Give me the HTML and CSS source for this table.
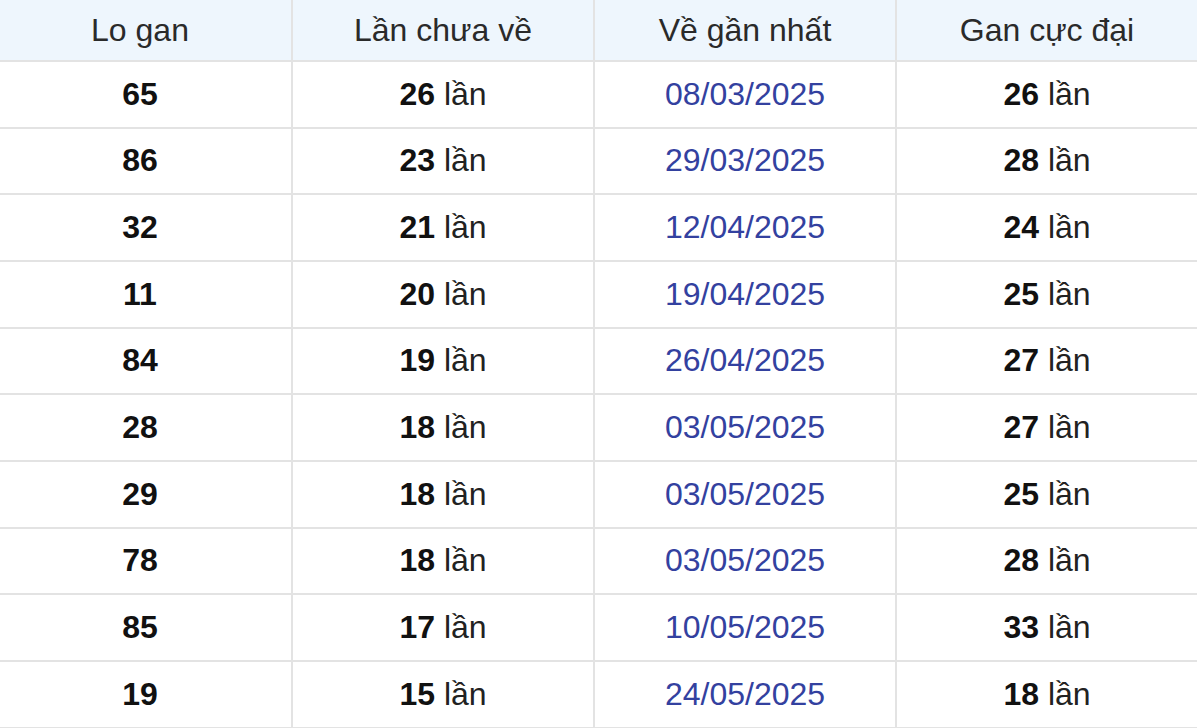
FILE: index.html
```html
<!DOCTYPE html>
<html lang="vi">
<head>
<meta charset="utf-8">
<title>Lo gan</title>
<link rel="stylesheet" href="styles.css">
</head>
<body>
<table class="gan-table">
  <colgroup>
    <col class="c"><col class="c"><col class="c"><col class="c">
  </colgroup>
  <thead>
    <tr>
      <th>Lo gan</th>
      <th>Lần chưa về</th>
      <th>Về gần nhất</th>
      <th>Gan cực đại</th>
    </tr>
  </thead>
  <tbody>
    <tr><td><b>65</b></td><td><b>26</b> lần</td><td class="date">08/03/2025</td><td><b>26</b> lần</td></tr>
    <tr><td><b>86</b></td><td><b>23</b> lần</td><td class="date">29/03/2025</td><td><b>28</b> lần</td></tr>
    <tr><td><b>32</b></td><td><b>21</b> lần</td><td class="date">12/04/2025</td><td><b>24</b> lần</td></tr>
    <tr><td><b>11</b></td><td><b>20</b> lần</td><td class="date">19/04/2025</td><td><b>25</b> lần</td></tr>
    <tr><td><b>84</b></td><td><b>19</b> lần</td><td class="date">26/04/2025</td><td><b>27</b> lần</td></tr>
    <tr><td><b>28</b></td><td><b>18</b> lần</td><td class="date">03/05/2025</td><td><b>27</b> lần</td></tr>
    <tr><td><b>29</b></td><td><b>18</b> lần</td><td class="date">03/05/2025</td><td><b>25</b> lần</td></tr>
    <tr><td><b>78</b></td><td><b>18</b> lần</td><td class="date">03/05/2025</td><td><b>28</b> lần</td></tr>
    <tr><td><b>85</b></td><td><b>17</b> lần</td><td class="date">10/05/2025</td><td><b>33</b> lần</td></tr>
    <tr><td><b>19</b></td><td><b>15</b> lần</td><td class="date">24/05/2025</td><td><b>18</b> lần</td></tr>
  </tbody>
</table>
</body>
</html>
```

FILE: styles.css
```css
html, body {
  margin: 0;
  padding: 0;
  background: #ffffff;
  overflow: hidden;
}

.gan-table {
  margin-left: -11px;
  width: 1208px;
  table-layout: fixed;
  border-collapse: separate;
  border-spacing: 0;
  font-family: "Liberation Sans", Arial, sans-serif;
  font-size: 32px;
  color: #222;
}

.gan-table .c {
  width: 302px;
}

.gan-table th,
.gan-table td {
  padding: 0;
  text-align: center;
  vertical-align: middle;
  border-bottom: 2px solid #e3e3e3;
  box-sizing: content-box;
}

.gan-table th + th,
.gan-table td + td {
  border-left: 2px solid #e3e3e3;
}

.gan-table th {
  height: 60px;
  background: #eef6fd;
  font-weight: normal;
  color: #2a2a2a;
  font-size: 32px;
}

.gan-table td {
  height: 64.67px;
}

.gan-table b {
  font-weight: bold;
  color: #111;
}

.gan-table td.date {
  color: #33419f;
}
```
